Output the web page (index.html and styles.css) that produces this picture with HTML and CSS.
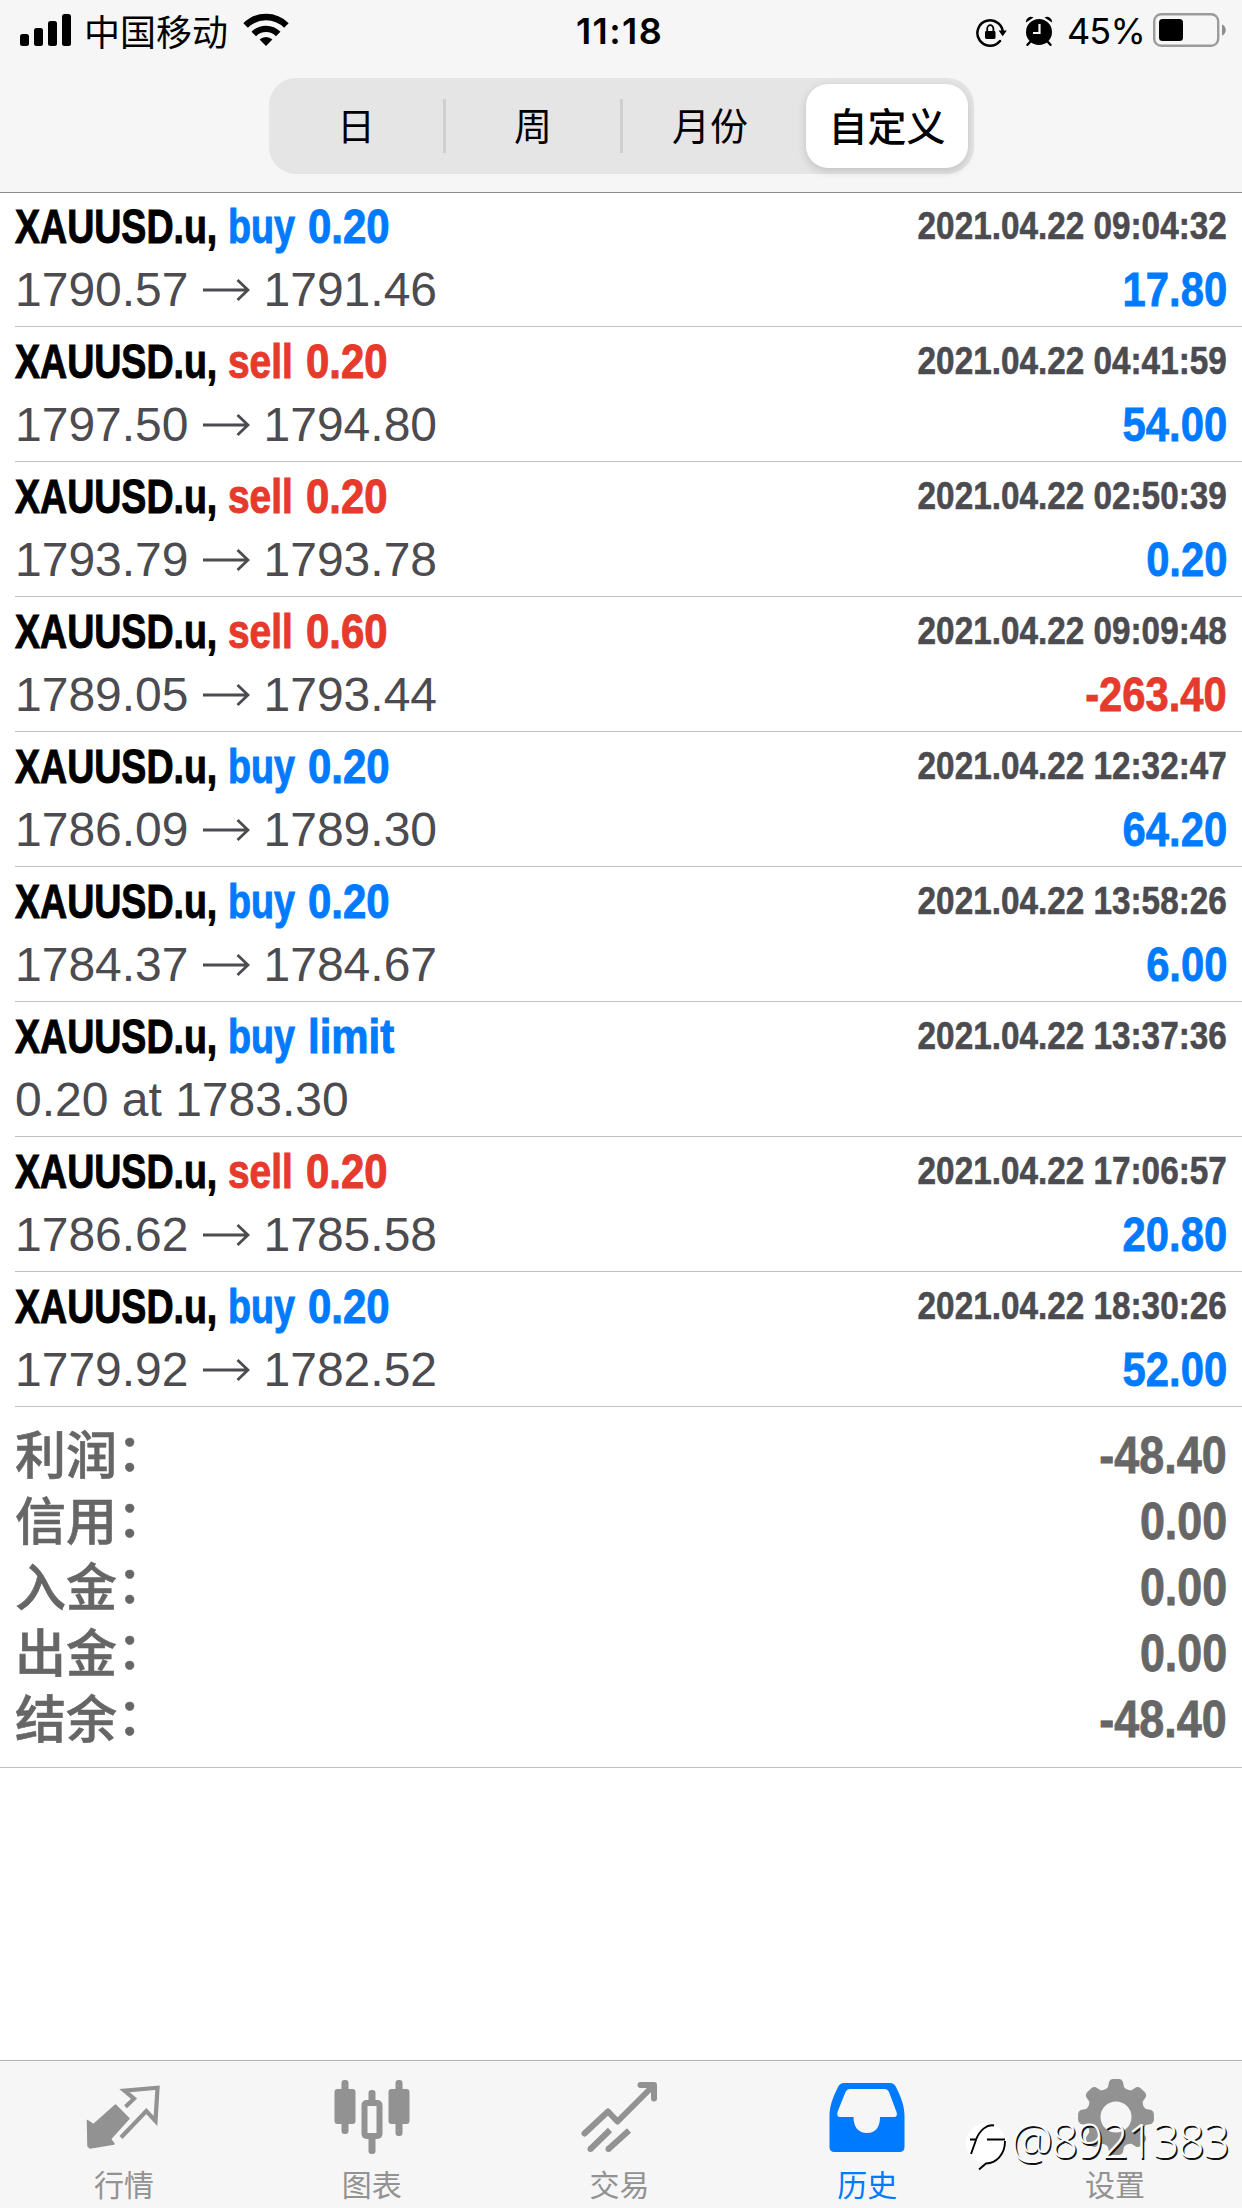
FILE: index.html
```html
<!DOCTYPE html>
<html lang="zh-CN">
<head>
<meta charset="utf-8">
<title>历史</title>
<link rel="stylesheet" href="styles.css">
</head>
<body>
<header class="header">
  <div class="status">
    <div class="status-left">
      <svg class="signal" width="52" height="33" viewBox="0 0 52 33"><rect x="0" y="21" width="9" height="12" rx="2.5"/><rect x="14" y="15" width="9" height="18" rx="2.5"/><rect x="28" y="8" width="9" height="25" rx="2.5"/><rect x="42" y="1" width="9" height="32" rx="2.5"/></svg>
      <span class="carrier">中国移动</span>
      <svg class="wifi" width="46" height="34" viewBox="0 0 46 34"><g fill="none" stroke="#000" stroke-width="6.4"><path d="M2.6 12.6a28.6 28.6 0 0 1 40.8 0"/><path d="M10.8 21a17.2 17.2 0 0 1 24.4 0"/></g><path d="M16.6 26.6a9.2 9.2 0 0 1 12.8 0L23 33z"/></svg>
    </div>
    <div class="time">11:18</div>
    <div class="status-right">
      <svg class="lock" width="31" height="30" viewBox="0 0 31 30"><path d="M26.8 15.5A12.7 12.7 0 1 0 24 23" fill="none" stroke="#000" stroke-width="2.5" stroke-linecap="round"/><path d="M22.6 12.6h8.2l-4.1 5.6z"/><rect x="9" y="13" width="10.5" height="8" rx="1.4"/><path d="M11.2 13.5v-2.7a3.1 3.6 0 0 1 6.2 0v2.7" fill="none" stroke="#000" stroke-width="1.8"/></svg>
      <svg class="alarm" width="28" height="30" viewBox="0 0 28 30"><circle cx="14" cy="16" r="13"/><path d="M1 6.6A5 5 0 0 1 8.5 1.6zM27 6.6a5 5 0 0 0-7.500-5z"/><path d="M5.500 25.500 2.500 28.800M22.500 25.500l3 3.300" stroke="#000" stroke-width="2.400" stroke-linecap="round"/><path d="M14.500 8v9H8" fill="none" stroke="#f6f6f6" stroke-width="2.200"/></svg>
      <span class="percent">45%</span>
      <svg class="battery" width="74" height="34" viewBox="0 0 74 34"><rect x="1.200" y="1.200" width="64" height="31.600" rx="7" fill="none" stroke="#9b9b9b" stroke-width="2.400"/><rect x="6" y="6" width="24" height="22" rx="3.500"/><path d="M69 11.500c5 1.600 5 9.400 0 11z" fill="#8e8e8e"/></svg>
    </div>
  </div>
  <nav class="segments">
    <span class="segment">日</span>
    <span class="segment">周</span>
    <span class="segment">月份</span>
    <span class="segment segment-on">自定义</span>
  </nav>
</header>

<main class="content">
  <section class="deals" id="deals"></section>
  <section class="summary">
    <div class="total"><span class="label">利润<i>：</i></span><b class="fig">-48.40</b></div>
    <div class="total"><span class="label">信用<i>：</i></span><b class="fig">0.00</b></div>
    <div class="total"><span class="label">入金<i>：</i></span><b class="fig">0.00</b></div>
    <div class="total"><span class="label">出金<i>：</i></span><b class="fig">0.00</b></div>
    <div class="total"><span class="label">结余<i>：</i></span><b class="fig">-48.40</b></div>
  </section>
</main>

<footer class="tabs">
  <div class="tab">
    <svg width="76" height="76" viewBox="0 0 76 76"><path d="M1.500 41.500 7.500 45.500 29.500 26 43 39.500 24.500 60 28 65 4 69 2 67z" stroke="#929292" stroke-width="1.500" stroke-linejoin="round"/><path d="M39.500 27.700 48 19.700 38.500 11.700 71.500 8.700 69.500 42 60.300 32 35 58.500" fill="none" stroke="#929292" stroke-width="4.200"/></svg>
    <span>行情</span>
  </div>
  <div class="tab">
    <svg width="76" height="76" viewBox="0 0 76 76"><rect x="0.500" y="10" width="21" height="35" rx="3"/><rect x="7.500" y="1" width="7" height="54" rx="3"/><rect x="54.500" y="10" width="21" height="35" rx="3"/><rect x="61.500" y="1" width="7" height="56" rx="3"/><rect x="34.500" y="11" width="7" height="12" rx="3"/><rect x="34.500" y="56" width="7" height="19" rx="3"/><rect x="30.500" y="24" width="15" height="33" rx="2" fill="none" stroke="#929292" stroke-width="6"/></svg>
    <span>图表</span>
  </div>
  <div class="tab">
    <svg width="76" height="76" viewBox="0 0 76 76"><g fill="none" stroke="#929292" stroke-width="6" stroke-linecap="round" stroke-linejoin="round"><path d="M3.500 54.500 27 32.500 36.500 42.500 72 7M59.500 6h13.500v13.500"/><path d="M9.500 70 29 51M27.500 70 48 51.500" stroke-linecap="butt"/><path d="M9.500 70h0M27.500 70h0"/></g></svg>
    <span>交易</span>
  </div>
  <div class="tab tab-on">
    <svg width="76" height="76" viewBox="0 0 76 76"><path fill-rule="evenodd" d="M15 4h46q4 0 6 4c5 10 8.500 19 8.500 29v31q0 5-5 5H5.500q-5 0-5-5V37C.5 27 4 18 9 8q2-4 6-4zM21 10q-3 0-4.500 3L8.500 33q-1 5 2.500 5h13.500c0 9 4 16 13.500 16s13-7 13-16h14q4 0 2.500-5L60 13q-1.500-3-4.500-3z"/></svg>
    <span>历史</span>
  </div>
  <div class="tab">
    <svg width="76" height="76" viewBox="-39 -38 76 76"><path id="gear" fill-rule="evenodd"/></svg>
    <span>设置</span>
  </div>
  <div class="watermark">
    <svg width="42" height="50" viewBox="0 0 42 50"><circle cx="20" cy="22" r="20" fill="#fff"/><path d="M4 18.500h6C14 9 21 3 28 4.500M21 18.500h18M10 19 5 33M39 20c0 14-9 22-19 22.500l-7 6" fill="none" stroke="#000" stroke-width="1.900"/></svg>
    <span>@8921383</span>
  </div>
</footer>
<script src="app.js"></script>
</body>
</html>
```
FILE: styles.css
```css
* { box-sizing: border-box; }
body {
  margin: 0;
  width: 1242px;
  height: 2208px;
  display: flex;
  flex-direction: column;
  background: #fff;
  color: #000;
  font-family: "Liberation Sans", "Noto Sans CJK SC", sans-serif;
  overflow: hidden;
}
.header {
  position: relative;
  z-index: 1;
  height: 192px;
  flex: none;
  background: #f6f6f6;
  box-shadow: 0 1px 0 rgba(0, 0, 0, .45);
}
.status {
  height: 78px;
  display: grid;
  grid-template-columns: 1fr auto 1fr;
  padding: 13px 15px 0 20px;
  align-items: start;
}
.status-left, .status-right { display: flex; align-items: flex-start; }
.status-right { justify-content: flex-end; }
.carrier {
  margin: -1px 15px 0 12px;
  font: 36px/36px "Noto Sans CJK SC", sans-serif;
}
.time { font: 600 36px/36px Inter, sans-serif; letter-spacing: 1.400px; margin: 0 4px 0 -4px; }
.percent { font: 400 36px/36px Inter, sans-serif; margin: 0 8px 0 14px; letter-spacing: -.8px; }
.lock { margin: 5px 18px 0 0; }
.alarm { margin-top: 3px; }
.segments {
  width: 705px;
  height: 96px;
  margin-left: 269px;
  display: grid;
  grid-template-columns: 177px 177px 183px 162px;
  padding: 6px 6px 6px 0;
  border-radius: 27px;
  background: #e5e5e5;
}
.segment {
  display: flex;
  align-items: center;
  justify-content: center;
  padding: 0 3px 4px 0;
  font: 38px/60px "Noto Sans CJK SC", sans-serif;
  background: linear-gradient(#cfcfcf, #cfcfcf) right 0 center / 3px 54px no-repeat;
}
.segment:nth-child(3) { background: none; padding-right: 9px; }
.segment-on {
  padding: 0 0 4px;
  font-weight: 500;
  font-size: 39px;
  background: #fff;
  border-radius: 22px;
  box-shadow: 0 3px 10px rgba(0, 0, 0, .16);
}
.content { flex: 1; margin-top: -1px; }
.deal {
  height: 135px;
  margin-left: 15px;
  padding-right: 15px;
  border-top: 1px solid #c0c0c2;
  display: grid;
  grid-template-rows: 66px 62px;
}
.line { display: flex; justify-content: space-between; align-items: center; }
.name { display: flex; font-weight: 700; font-size: 48px; line-height: 60px; padding-top: 3px; -webkit-text-stroke: 1px currentColor; }
.name span { display: block; white-space: pre; transform-origin: 0 50%; }
.symbol { width: 213px; transform: scaleX(.782); }
.side { width: 80px; transform: scaleX(.785); }
.side.sell { width: 78px; transform: scaleX(.81); }
.volume { transform: scaleX(.873); }
.buy { color: #007aff; }
.sell { color: #e53a2c; }
.date {
  font-weight: 700;
  font-size: 39.500px;
  color: #4b4b50;
  -webkit-text-stroke: .6px currentColor;
  transform: scaleX(.843);
  transform-origin: 100% 50%;
}
.prices { display: flex; align-items: center; font-size: 48px; line-height: 62px; padding-top: 2px; color: #4b4b50; }
.prices svg { margin: 0 14px 0 14px; }
.fig { display: block; font-weight: 700; font-size: 48px; -webkit-text-stroke: .8px currentColor; transform: scaleX(.87); transform-origin: 100% 50%; }
.summary {
  height: 362px;
  padding: 15px 15px 0 15px;
  border-bottom: 1px solid #c0c0c2;
  background: linear-gradient(#c0c0c2, #c0c0c2) 15px 0 / 100% 1px no-repeat;
  color: #666;
}
.total { height: 66px; display: flex; justify-content: space-between; align-items: center; }
.label { font: 500 51px/60px "Noto Sans CJK SC", sans-serif; padding-bottom: 4px; -webkit-text-stroke: .6px currentColor; }
.label i { display: inline-block; font-style: normal; transform: translateY(-3px); }
.total .fig { font-size: 51px; line-height: 60px; transform: scaleX(.88); padding-top: 4px; }
.tabs {
  position: relative;
  height: 148px;
  display: grid;
  grid-template-columns: repeat(5, 247.800px);
  background: #f6f6f6;
  border-top: 1px solid #b0b2b0;
  color: #929292;
}
.tab { display: flex; flex-direction: column; align-items: center; padding-top: 18px; font: 30px/36px "Noto Sans CJK SC", sans-serif; }
.tab svg { fill: #929292; overflow: visible; margin-bottom: 10px; }
.tab-on { color: #007aff; }
.tab-on svg { fill: #007aff; }
.watermark {
  position: absolute;
  left: 966px;
  top: 54px;
  display: flex;
  align-items: flex-start;
  gap: 3px;
  color: #fbfbfb;
  font: 300 47px/50px "Open Sans", sans-serif;
  letter-spacing: -1.500px;
  text-shadow: 1.500px 1.500px 0 #111;
}
.watermark svg { margin-top: 6px; }
```
FILE: app.js
```javascript
const deals = [
  ["buy", "0.20", "1790.57", "1791.46", "09:04:32", "17.80"],
  ["sell", "0.20", "1797.50", "1794.80", "04:41:59", "54.00"],
  ["sell", "0.20", "1793.79", "1793.78", "02:50:39", "0.20"],
  ["sell", "0.60", "1789.05", "1793.44", "09:09:48", "-263.40"],
  ["buy", "0.20", "1786.09", "1789.30", "12:32:47", "64.20"],
  ["buy", "0.20", "1784.37", "1784.67", "13:58:26", "6.00"],
  ["buy", "limit", "0.20 at 1783.30", "", "13:37:36", ""],
  ["sell", "0.20", "1786.62", "1785.58", "17:06:57", "20.80"],
  ["buy", "0.20", "1779.92", "1782.52", "18:30:26", "52.00"]
];
const arrow = '<svg width="47" height="24" viewBox="0 0 47 24"><path d="M0 12h45M34.500 2 45 12 34.500 22" fill="none" stroke="#4b4b50" stroke-width="2.800"/></svg>';
document.getElementById("deals").innerHTML = deals.map(([side, volume, open, close, time, profit]) => `<article class="deal">
    <div class="line">
      <div class="name"><span class="symbol">XAUUSD.u,</span><span class="side ${side}">${side}</span><span class="volume ${side}">${volume}</span></div>
      <time class="date">2021.04.22 ${time}</time>
    </div>
    <div class="line">
      <div class="prices">${open}${close ? arrow + close : ""}</div>
      <b class="fig ${profit.startsWith("-") ? "sell" : "buy"}">${profit}</b>
    </div>
  </article>`).join("");

// Eight-toothed gear outline around a round hole.
const point = (r, deg) => {
  const a = deg * Math.PI / 180;
  return `${(r * Math.sin(a)).toFixed(1)} ${(-r * Math.cos(a)).toFixed(1)}`;
};
let outline = "";
for (let i = 0; i < 8; i++) {
  const c = i * 45;
  outline += `${i ? "L" : "M"}${point(31, c - 15)}L${point(36, c - 11)}Q${point(38, c - 9)} ${point(38, c - 5)}L${point(38, c + 5)}Q${point(38, c + 9)} ${point(36, c + 11)}L${point(31, c + 15)}Q${point(28.5, c + 22.5)} ${point(31, c + 30)}`;
}
document.getElementById("gear").setAttribute("d", outline + "ZM-15.500 0a15.500 15.500 0 1 0 31 0a15.500 15.500 0 1 0-31 0z");
```
